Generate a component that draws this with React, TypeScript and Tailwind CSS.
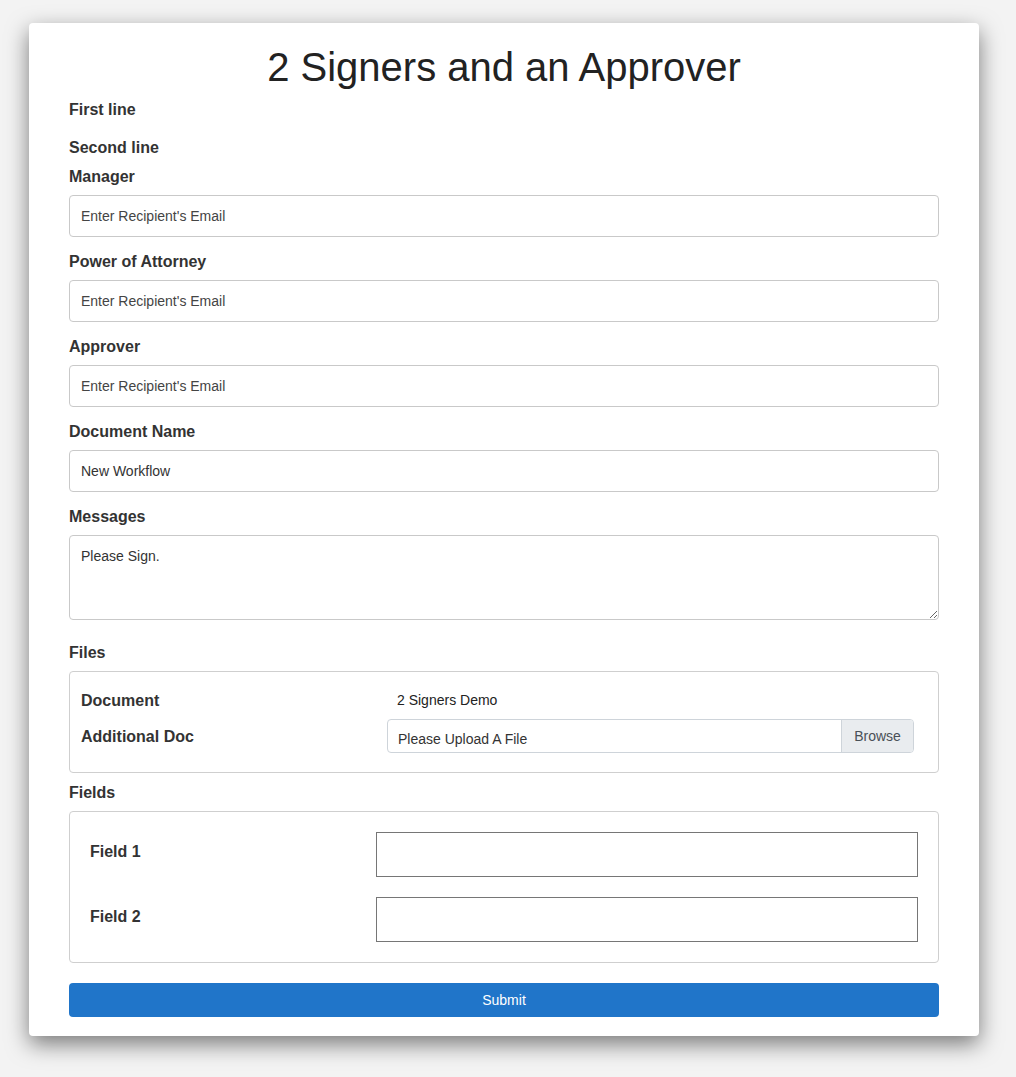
const FONT = "font-['Liberation_Sans','Helvetica_Neue',Arial,sans-serif]"

// ── Pieces ─────────────────────────────────────────────────────────────────

function Label({ children, className = '' }: { children: React.ReactNode; className?: string }) {
  return <div className={`text-[16px] leading-[22px] pt-[2px] font-bold text-[#333] ${className}`}>{children}</div>
}

function EmailField({ label, value, placeholder }: { label: string; value?: string; placeholder?: string }) {
  return (
    <div className="mt-[12px]">
      <Label>{label}</Label>
      <input
        type="text"
        defaultValue={value}
        placeholder={placeholder}
        className="mt-[7px] block w-full h-[42px] px-[11px] rounded-[4px] border border-[#c9c9c9] bg-white text-[14px] text-[#333] placeholder:text-[#444] outline-none"
      />
    </div>
  )
}

// ── Component ──────────────────────────────────────────────────────────────

export default function App() {
  return (
    <div className={`min-h-screen bg-[#f3f3f3] pt-[23px] pb-[41px] ${FONT}`}>
      <div className="ml-[29px] w-[950px] bg-white rounded-[4px] px-[40px] pt-[20px] pb-[19px] shadow-[0_8px_22px_rgba(0,0,0,0.5)]">
        <h1 className="text-center text-[40px] leading-[48px] text-[#222]">2 Signers and an Approver</h1>

        <Label className="mt-[6px]">First line</Label>
        <Label className="mt-[14px]">Second line</Label>

        <div className="mt-[5px]">
          <Label>Manager</Label>
          <input
            type="text"
            placeholder="Enter Recipient's Email"
            className="mt-[7px] block w-full h-[42px] px-[11px] rounded-[4px] border border-[#c9c9c9] bg-white text-[14px] text-[#333] placeholder:text-[#444] outline-none"
          />
        </div>
        <EmailField label="Power of Attorney" placeholder="Enter Recipient's Email" />
        <EmailField label="Approver" placeholder="Enter Recipient's Email" />
        <EmailField label="Document Name" value="New Workflow" />

        <div className="mt-[12px]">
          <Label>Messages</Label>
          <textarea
            defaultValue="Please Sign."
            className="mt-[7px] block w-full h-[85px] px-[11px] py-[10px] rounded-[4px] border border-[#c9c9c9] bg-white text-[14px] leading-[20px] text-[#333] outline-none"
          />
        </div>

        {/* Files */}
        <Label className="mt-[20px]">Files</Label>
        <div className="mt-[7px] border border-[#cfcfcf] rounded-[4px] pl-[11px] pr-[24px] pt-[16px] pb-[19px]">
          <div className="grid grid-cols-[306px_1fr] items-center h-[24px]">
            <Label>Document</Label>
            <div className="pl-[10px] text-[14px] text-[#222]">2 Signers Demo</div>
          </div>
          <div className="grid grid-cols-[306px_1fr] items-center mt-[7px]">
            <Label>Additional Doc</Label>
            <div className="flex h-[34px] rounded-[4px] border border-[#ced4da] overflow-hidden">
              <div className="flex-1 flex items-center pl-[10px] pt-[6px] text-[14px] text-[#333]">Please Upload A File</div>
              <div className="w-[72px] flex items-center justify-center bg-[#e9ecef] border-l border-[#ced4da] text-[14px] text-[#495057]">
                Browse
              </div>
            </div>
          </div>
        </div>

        {/* Fields */}
        <Label className="mt-[7px]">Fields</Label>
        <div className="mt-[7px] border border-[#cfcfcf] rounded-[4px] p-[20px] flex flex-col gap-[20px]">
          {['Field 1', 'Field 2'].map(f => (
            <div key={f} className="grid grid-cols-[286px_1fr] items-center">
              <Label className="-mt-[8px]">{f}</Label>
              <input type="text" className="block w-full h-[45px] border border-[#767676] bg-white px-2 text-[14px] outline-none" />
            </div>
          ))}
        </div>

        <button className="mt-[20px] block w-full h-[34px] rounded-[4px] bg-[#2075c9] text-white text-[14px]">
          Submit
        </button>
      </div>
    </div>
  )
}
